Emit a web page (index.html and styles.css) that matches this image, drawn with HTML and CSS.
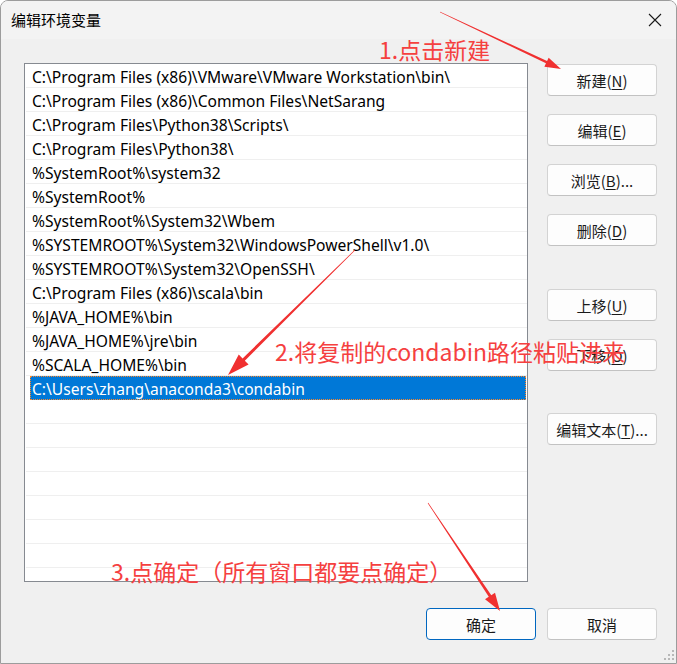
FILE: index.html
```html
<!DOCTYPE html>
<html lang="zh-CN">
<head>
    <meta charset="UTF-8">
    <title>编辑环境变量</title>
    <link rel="stylesheet" href="styles.css">
</head>
<body>
    <div class="chuangkou">
        <header class="biaoti-lan">
            <span class="biaoti">编辑环境变量</span>
            <svg class="guanbi" width="14" height="14" viewBox="0 0 14 14">
                <path d="M1 1 L13 13 M13 1 L1 13" stroke="#1a1a1a" stroke-width="1.1" fill="none"/>
            </svg>
        </header>

        <div class="neirong">
            <div class="liebiao">
                <div class="hang">C:\Program Files (x86)\VMware\VMware Workstation\bin\</div>
                <div class="hang">C:\Program Files (x86)\Common Files\NetSarang</div>
                <div class="hang">C:\Program Files\Python38\Scripts\</div>
                <div class="hang">C:\Program Files\Python38\</div>
                <div class="hang">%SystemRoot%\system32</div>
                <div class="hang">%SystemRoot%</div>
                <div class="hang">%SystemRoot%\System32\Wbem</div>
                <div class="hang">%SYSTEMROOT%\System32\WindowsPowerShell\v1.0\</div>
                <div class="hang">%SYSTEMROOT%\System32\OpenSSH\</div>
                <div class="hang">C:\Program Files (x86)\scala\bin</div>
                <div class="hang">%JAVA_HOME%\bin</div>
                <div class="hang">%JAVA_HOME%\jre\bin</div>
                <div class="hang">%SCALA_HOME%\bin</div>
                <div class="hang xuanzhong">C:\Users\zhang\anaconda3\condabin</div>
                <div class="hang"></div>
                <div class="hang"></div>
                <div class="hang"></div>
                <div class="hang"></div>
                <div class="hang"></div>
                <div class="hang"></div>
                <div class="hang"></div>
                <div class="hang"></div>
            </div>

            <div class="ce-anniu">
                <button>新建(<u>N</u>)</button>
                <button>编辑(<u>E</u>)</button>
                <button>浏览(<u>B</u>)...</button>
                <button>删除(<u>D</u>)</button>
                <button class="shangyi">上移(<u>U</u>)</button>
                <button>下移(<u>O</u>)</button>
                <button class="bianji-wenben">编辑文本(<u>T</u>)...</button>
            </div>
        </div>

        <footer class="dibu">
            <button class="moren">确定</button>
            <button>取消</button>
        </footer>

        <svg class="chicun" width="12" height="12" viewBox="0 0 12 12">
            <rect x="9" y="1" width="2" height="2" fill="#b8b8b8"/>
            <rect x="5" y="5" width="2" height="2" fill="#b8b8b8"/>
            <rect x="9" y="5" width="2" height="2" fill="#b8b8b8"/>
            <rect x="1" y="9" width="2" height="2" fill="#b8b8b8"/>
            <rect x="5" y="9" width="2" height="2" fill="#b8b8b8"/>
            <rect x="9" y="9" width="2" height="2" fill="#b8b8b8"/>
        </svg>

        <!-- 标注 -->
        <svg class="jiantou" width="677" height="664" viewBox="0 0 677 664">
            <polygon points="439.87,12.27 545.97,63.36 544.39,66.70 561,69 548.65,57.66 547.07,61.00 440.13,11.73" />
            <polygon points="354.79,249.79 242.56,358.43 238.77,354.58 228,375 248.59,364.56 244.80,360.71 355.21,250.21" />
            <polygon points="427.75,503.17 488.77,596.85 485.03,599.35 500,611 495.01,592.69 491.27,595.19 428.25,502.83" />
        </svg>
        <div class="biaozhu biaozhu-1">1.点击新建</div>
        <div class="biaozhu biaozhu-2">2.将复制的condabin路径粘贴进来</div>
        <div class="biaozhu biaozhu-3">3.点确定（所有窗口都要点确定）</div>
    </div>
</body>
</html>
```

FILE: styles.css
```css
* {
    box-sizing: border-box;
    margin: 0;
    padding: 0;
}

body {
    background-color: #ffffff;
    font-family: "Noto Sans", "Noto Sans CJK SC", sans-serif;
    font-size: 15px;
    color: #000;
}

.chuangkou {
    position: relative;
    width: 677px;
    height: 664px;
    background-color: #f0f0f0;
    border: 1px solid #9c9c9c;
    border-radius: 8px 8px 0 0;
    overflow: hidden;
}

.biaoti-lan {
    display: flex;
    justify-content: space-between;
    align-items: center;
    height: 38px;
    padding: 0 14px 0 10px;
    background-color: #f3f3f3;
}

.biaoti {
    font-family: "Noto Sans CJK SC", sans-serif;
    font-size: 15px;
    margin-top: -2px;
}

.guanbi {
    margin-top: -1px;
}

.neirong {
    display: flex;
    padding: 24px 19px 0 23px;
    gap: 19px;
}

.liebiao {
    width: 504px;
    height: 519px;
    background-color: #fff;
    border: 1px solid #868a91;
    overflow: hidden;
    font-size: 15.6px;
}

.hang {
    height: 24px;
    line-height: 23px;
    margin-left: 1px;
    padding: 2px 0 0 6px;
    border-bottom: 1px solid #efefef;
    white-space: nowrap;
}

.hang.xuanzhong {
    margin-left: 5px;
    margin-right: 1px;
    padding-left: 2px;
    background-color: #0078d7;
    color: #fff;
    border-bottom-color: #0078d7;
    outline: 1px dotted #ff8728;
    outline-offset: -1px;
}

.ce-anniu {
    display: flex;
    flex-direction: column;
    gap: 18px;
    padding-top: 1px;
}

button {
    width: 110px;
    height: 32px;
    font-family: "Noto Sans CJK SC", sans-serif;
    font-size: 15px;
    color: #1a1a1a;
    background-color: #fdfdfd;
    border: 1px solid #d3d3d3;
    border-bottom-color: #c2c2c2;
    border-radius: 4px;
}

button u {
    text-underline-offset: 2px;
}

.shangyi {
    margin-top: 25px;
}

.bianji-wenben {
    margin-top: 24px;
}

.dibu {
    display: flex;
    justify-content: flex-end;
    gap: 11px;
    padding: 26px 19px 0 0;
}

.moren {
    border: 1px solid #0067c0;
}

.chicun {
    position: absolute;
    right: 1px;
    bottom: 2px;
}

.jiantou {
    position: absolute;
    left: -1px;
    top: -1px;
    pointer-events: none;
}

.jiantou polygon {
    fill: #f03030;
}

.biaozhu {
    position: absolute;
    font-family: "Noto Sans CJK SC", sans-serif;
    font-size: 23px;
    line-height: 26px;
    color: #f5403f;
    white-space: nowrap;
}

.biaozhu-1 {
    left: 378px;
    top: 35px;
}

.biaozhu-2 {
    left: 274px;
    top: 337px;
}

.biaozhu-3 {
    left: 110px;
    top: 557px;
}
```
